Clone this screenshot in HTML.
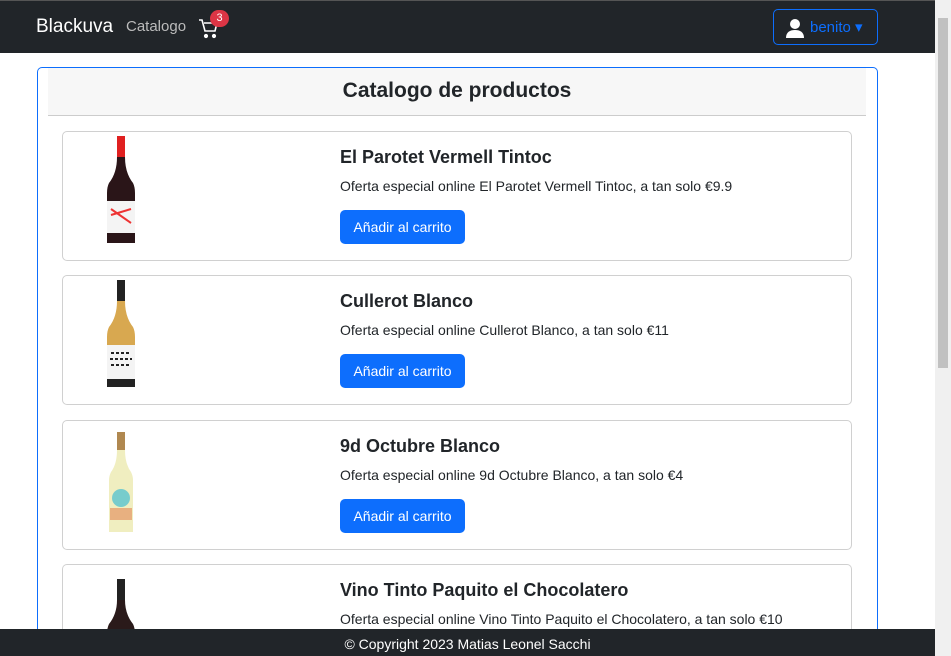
<!DOCTYPE html><html><head><style>
html,body{margin:0;width:951px;height:656px;overflow:hidden}
body{font-family:"Liberation Sans",sans-serif;background:#fff;position:relative}
.nav{position:absolute;left:0;top:0;width:935px;height:52px;background:#212529;border-top:1px solid #555}
.sb{position:absolute;right:0;top:0;width:16px;height:656px;background:#f0f0f0}
.sb div{position:absolute;left:3px;top:18px;width:10px;height:350px;background:#c1c1c1}
.main{position:absolute;left:37px;top:67px;width:839px;height:580px;border:1px solid #0d6efd;border-bottom:none;border-radius:5px 5px 0 0}
.hd{position:absolute;left:48px;top:68px;width:818px;height:47px;background:#f7f7f7;border-bottom:1px solid #ccc;text-align:center;font-size:21px;font-weight:600;line-height:46px;color:#212529}
.card{position:absolute;left:62px;width:788px;height:128px;border:1px solid #d0d0d0;border-radius:5px;background:#fff}
.card h3{position:absolute;left:277px;top:15px;margin:0;font-size:18px;font-weight:600;color:#212529}
.card p{position:absolute;left:277px;top:46px;margin:0;font-size:14px;color:#212529}
.btn{position:absolute;left:277px;top:78px;width:125px;height:34px;background:#0d6efd;color:#fff;border-radius:5px;font-size:14px;line-height:34px;text-align:center}
.card svg{position:absolute;left:40px;top:3px}
.foot{position:absolute;left:0;top:629px;width:935px;height:27px;background:#212529;color:#fff;text-align:center;font-size:14px;line-height:30px}
</style></head><body>
<div class="nav">
<span style="position:absolute;left:36px;top:15px;color:#fff;font-size:19px">Blackuva</span>
<span style="position:absolute;left:126px;top:17px;color:#bbb;font-size:15px">Catalogo</span>
<svg style="position:absolute;left:198px;top:16px" width="22" height="22" viewBox="0 0 22 22" fill="none" stroke="#fff" stroke-width="1.6"><path d="M1 3h3l3 11h10l2-8H6"/><circle cx="8" cy="19" r="1.3" fill="#fff"/><circle cx="16" cy="19" r="1.3" fill="#fff"/></svg>
<div style="position:absolute;left:210px;top:9px;width:19px;height:17px;border-radius:9px;background:#dc3545;color:#fff;font-size:11px;text-align:center;line-height:16px">3</div>
<div style="position:absolute;left:773px;top:8px;width:103px;height:34px;border:1px solid #0d6efd;border-radius:5px">
<svg style="position:absolute;left:11px;top:8px" width="20" height="20" viewBox="0 0 20 20" fill="#fff"><circle cx="10" cy="6" r="5"/><path d="M1 20c0-6 4-8 9-8s9 2 9 8z"/></svg>
<span style="position:absolute;left:36px;top:8px;color:#0d6efd;font-size:15px">benito ▾</span></div>
</div>
<div class="main"></div>
<div class="hd">Catalogo de productos</div>

<div class="card" style="top:131px"><svg width="36" height="110" viewBox="0 0 36 110"><rect x="14" y="1" width="8" height="22" fill="#e02020"/><path d="M14 22 Q14 38 6 48 Q4 52 4 58 V108 H32 V58 Q32 52 30 48 Q22 38 22 22z" fill="#2a1518"/><rect x="4" y="66" width="28" height="32" fill="#f4f4f4"/><path d="M8 74l20 14M8 80l20-6" stroke="#e33" stroke-width="2"/></svg>
<h3>El Parotet Vermell Tintoc</h3><p>Oferta especial online El Parotet Vermell Tintoc, a tan solo €9.9</p><div class="btn">Añadir al carrito</div></div>

<div class="card" style="top:275px"><svg width="36" height="110" viewBox="0 0 36 110"><rect x="14" y="1" width="8" height="22" fill="#222"/><path d="M14 22 Q14 38 6 48 Q4 52 4 58 V108 H32 V58 Q32 52 30 48 Q22 38 22 22z" fill="#d8a850"/><rect x="4" y="66" width="28" height="34" fill="#f4f4f4"/><path d="M8 74h20M7 80h22M8 86h20" stroke="#222" stroke-width="2" stroke-dasharray="3 2"/><rect x="4" y="100" width="28" height="8" fill="#222"/></svg>
<h3>Cullerot Blanco</h3><p>Oferta especial online Cullerot Blanco, a tan solo €11</p><div class="btn">Añadir al carrito</div></div>

<div class="card" style="top:420px"><svg width="36" height="110" viewBox="0 0 36 110"><rect x="14" y="8" width="8" height="20" fill="#b08850"/><path d="M14 26 Q14 40 8 48 Q6 52 6 56 V108 H30 V56 Q30 52 28 48 Q22 40 22 26z" fill="#f0eec0"/><circle cx="18" cy="74" r="9" fill="#7cc"/><rect x="7" y="84" width="22" height="12" fill="#e8b080"/></svg>
<h3>9d Octubre Blanco</h3><p>Oferta especial online 9d Octubre Blanco, a tan solo €4</p><div class="btn">Añadir al carrito</div></div>

<div class="card" style="top:564px;height:80px;overflow:hidden;border-bottom:none"><svg width="36" height="110" viewBox="0 0 36 110"><rect x="14" y="11" width="8" height="22" fill="#222"/><path d="M14 32 Q14 46 6 56 Q4 60 4 66 V108 H32 V66 Q32 60 30 56 Q22 46 22 32z" fill="#2a1a1a"/></svg>
<h3>Vino Tinto Paquito el Chocolatero</h3><p>Oferta especial online Vino Tinto Paquito el Chocolatero, a tan solo €10</p></div>

<div class="foot">© Copyright 2023 Matias Leonel Sacchi</div>
<div class="sb"><div></div></div>
</body></html>
